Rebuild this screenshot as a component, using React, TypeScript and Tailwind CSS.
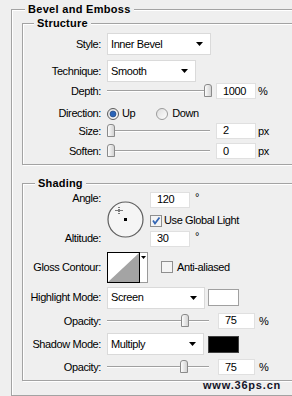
const etched = "border border-[#a3a3a3] shadow-[1px_1px_0_#ffffff,inset_1px_1px_0_#ffffff]";

const Arrow = () => (
  <svg width="7" height="4" viewBox="0 0 7 4" className="shrink-0">
    <path d="M0 0H7L3.5 4Z" fill="#000" />
  </svg>
);

const Select = ({ value, w }: { value: string; w: string }) => (
  <div className={`${w} h-[22px] bg-white border border-[#dadada] flex items-center justify-between pl-[3px] pr-[7px]`}>
    <span>{value}</span>
    <Arrow />
  </div>
);

const Field = ({ value, w = "w-[40px]" }: { value: string; w?: string }) => (
  <div className={`${w} h-[16px] bg-white border border-[#e0e0e0] flex items-center pl-[6px] leading-none`}>
    {value}
  </div>
);

const Thumb = () => (
  <svg width="8" height="13" viewBox="0 0 8 13">
    <defs>
      <linearGradient id="tg" x1="0" y1="0" x2="1" y2="0">
        <stop offset="0" stopColor="#ffffff" />
        <stop offset="1" stopColor="#cfcfcf" />
      </linearGradient>
    </defs>
    <path d="M0.5 3Q0.5 0.5 3 0.5H5Q7.5 0.5 7.5 3V12.5H0.5Z" fill="url(#tg)" stroke="#8a8a8a" />
  </svg>
);

const Slider = ({ w, pos }: { w: string; pos: string }) => (
  <div className={`${w} h-[16px] relative flex items-center`}>
    <div className="w-full h-[2px] border-t border-[#a0a0a0] border-b border-b-white" />
    <div className={`absolute top-[1px] ${pos}`}>
      <Thumb />
    </div>
  </div>
);

const Radio = ({ on }: { on?: boolean }) => (
  <svg width="12" height="12" viewBox="0 0 12 12" className="shrink-0">
    <defs>
      <linearGradient id={on ? "rg1" : "rg0"} x1="0" y1="0" x2="1" y2="1">
        <stop offset="0" stopColor="#dcdcdc" />
        <stop offset="1" stopColor="#ffffff" />
      </linearGradient>
    </defs>
    <circle cx="6" cy="6" r="5.5" fill={`url(#${on ? "rg1" : "rg0"})`} stroke={on ? "#5b5b5b" : "#9a9a9a"} />
    {on && <circle cx="6" cy="6" r="3" fill="#2a64b8" stroke="#1c3f75" strokeWidth="0.6" />}
  </svg>
);

const Check = ({ on }: { on?: boolean }) => (
  <svg width="12" height="12" viewBox="0 0 12 12" className="shrink-0">
    <rect x="0.5" y="0.5" width="11" height="11" fill="#f4f4f4" stroke="#8f8f8f" />
    {on && <path d="M3 5.5L5 8.5L9.5 2.5" fill="none" stroke="#3466b4" strokeWidth="1.8" />}
  </svg>
);

const Label = ({ children }: { children: string }) => (
  <div className="w-[78px] text-right shrink-0">{children}</div>
);

export default function App() {
  return (
    <div
      className="w-[292px] h-[396px] overflow-hidden bg-[#efefef] pl-[11px] pt-[3px] text-[11px] tracking-[-0.4px] text-black relative"
      style={{ fontFamily: '"Liberation Sans", Arial, sans-serif' }}
    >
      <fieldset className={`${etched} w-[300px] pb-[14px]`}>
        <legend className="ml-[13px] px-[3px] font-bold leading-[13px] tracking-[0.3px] bg-[#efefef]">Bevel and Emboss</legend>

        {/* Structure */}
        <fieldset className={`${etched} ml-[10px] mr-[10px] mt-[1px] pt-[3px] pb-[4px]`}>
          <legend className="ml-[11px] px-[3px] font-bold leading-[13px] tracking-[0.2px] bg-[#efefef]">Structure</legend>

          <div className="flex items-center gap-[6px]">
            <Label>Style:</Label>
            <Select value="Inner Bevel" w="w-[104px]" />
          </div>
          <div className="flex items-center gap-[6px] mt-[5px]">
            <Label>Technique:</Label>
            <Select value="Smooth" w="w-[89px]" />
          </div>
          <div className="flex items-center mt-[1px]">
            <Label>Depth:</Label>
            <div className="ml-[6px]"><Slider w="w-[103px]" pos="left-[97px]" /></div>
            <div className="ml-[6px]"><Field value="1000" /></div>
            <span className="ml-[2px]">%</span>
          </div>
          <div className="flex items-center h-[16px] mt-[6px]">
            <Label>Direction:</Label>
            <div className="ml-[6px] flex items-center gap-[3px]">
              <Radio on />
              <span>Up</span>
            </div>
            <div className="ml-[21px] flex items-center gap-[4px]">
              <Radio />
              <span>Down</span>
            </div>
          </div>
          <div className="flex items-center mt-[1px]">
            <Label>Size:</Label>
            <div className="ml-[6px]"><Slider w="w-[103px]" pos="left-[0px]" /></div>
            <div className="ml-[6px]"><Field value="2" /></div>
            <span className="ml-[2px]">px</span>
          </div>
          <div className="flex items-center mt-[4px]">
            <Label>Soften:</Label>
            <div className="ml-[6px]"><Slider w="w-[103px]" pos="left-[0px]" /></div>
            <div className="ml-[6px]"><Field value="0" /></div>
            <span className="ml-[2px]">px</span>
          </div>
        </fieldset>

        {/* Shading */}
        <fieldset className={`${etched} ml-[10px] mr-[10px] mt-[12px] pt-[1px] pb-[4px]`}>
          <legend className="ml-[12px] px-[3px] font-bold leading-[13px] tracking-[0.2px] bg-[#efefef]">Shading</legend>

          <div className="flex">
            <div className="w-[78px] h-[54px] flex flex-col justify-between text-right leading-[14px]">
              <div>Angle:</div>
              <div>Altitude:</div>
            </div>
            <svg width="37" height="37" viewBox="0 0 37 37" className="ml-[6px] mt-[10px]">
              <circle cx="18.5" cy="18.5" r="17.5" fill="#f5f5f5" stroke="#5e5e5e" strokeWidth="1.2" />
              <path d="M12 6V13M8.5 9.5H15.5" stroke="#000" strokeWidth="1" strokeDasharray="1 1" />
              <rect x="17" y="17" width="3" height="3" fill="#000" />
            </svg>
            <div className="ml-[6px] flex flex-col">
              <div className="flex items-start mt-[1px]">
                <Field value="120" />
                <span className="ml-[5px] leading-[10px]">°</span>
              </div>
              <div className="flex items-center gap-[2px] mt-[7px] h-[12px]">
                <Check on />
                <span>Use Global Light</span>
              </div>
              <div className="flex items-start mt-[4px]">
                <Field value="30" />
                <span className="ml-[5px] leading-[10px]">°</span>
              </div>
            </div>
          </div>

          <div className="flex items-center mt-[5px]">
            <Label>Gloss Contour:</Label>
            <div className="ml-[6px] flex">
              <svg width="33" height="31" viewBox="0 0 33 31">
                <rect x="0.5" y="0.5" width="32" height="30" fill="#fff" stroke="#000" />
                <path d="M1 30L32 1V30Z" fill="#a4a4a4" />
              </svg>
              <div className="w-[8px] h-[31px] bg-white border border-[#9a9a9a] border-l-0 flex justify-center pt-[3px]">
                <svg width="5" height="3" viewBox="0 0 5 3"><path d="M0 0H5L2.5 3Z" fill="#000" /></svg>
              </div>
            </div>
            <div className="ml-[13px] flex items-center gap-[4px]">
              <Check />
              <span>Anti-aliased</span>
            </div>
          </div>

          <div className="flex items-center mt-[4px]">
            <Label>Highlight Mode:</Label>
            <div className="ml-[6px]"><Select value="Screen" w="w-[98px]" /></div>
            <div className="ml-[3px] w-[31px] h-[17px] bg-white border border-[#a0a0a0]" />
          </div>
          <div className="flex items-center mt-[4px]">
            <Label>Opacity:</Label>
            <div className="ml-[6px]"><Slider w="w-[102px]" pos="left-[74px]" /></div>
            <div className="ml-[9px]"><Field value="75" w="w-[37px]" /></div>
            <span className="ml-[4px]">%</span>
          </div>
          <div className="flex items-center mt-[4px]">
            <Label>Shadow Mode:</Label>
            <div className="ml-[6px]"><Select value="Multiply" w="w-[97px]" /></div>
            <div className="ml-[4px] w-[31px] h-[17px] bg-black border border-[#404040]" />
          </div>
          <div className="flex items-center mt-[4px]">
            <Label>Opacity:</Label>
            <div className="ml-[6px]"><Slider w="w-[102px]" pos="left-[73px]" /></div>
            <div className="ml-[9px]"><Field value="75" w="w-[37px]" /></div>
            <span className="ml-[4px]">%</span>
          </div>
        </fieldset>
      </fieldset>

      {/* watermark */}
      <div className="absolute left-[203px] top-[377px] font-bold text-[11px] tracking-[0.8px] text-[#141428]">
        www.36ps.cn
      </div>
    </div>
  );
}
